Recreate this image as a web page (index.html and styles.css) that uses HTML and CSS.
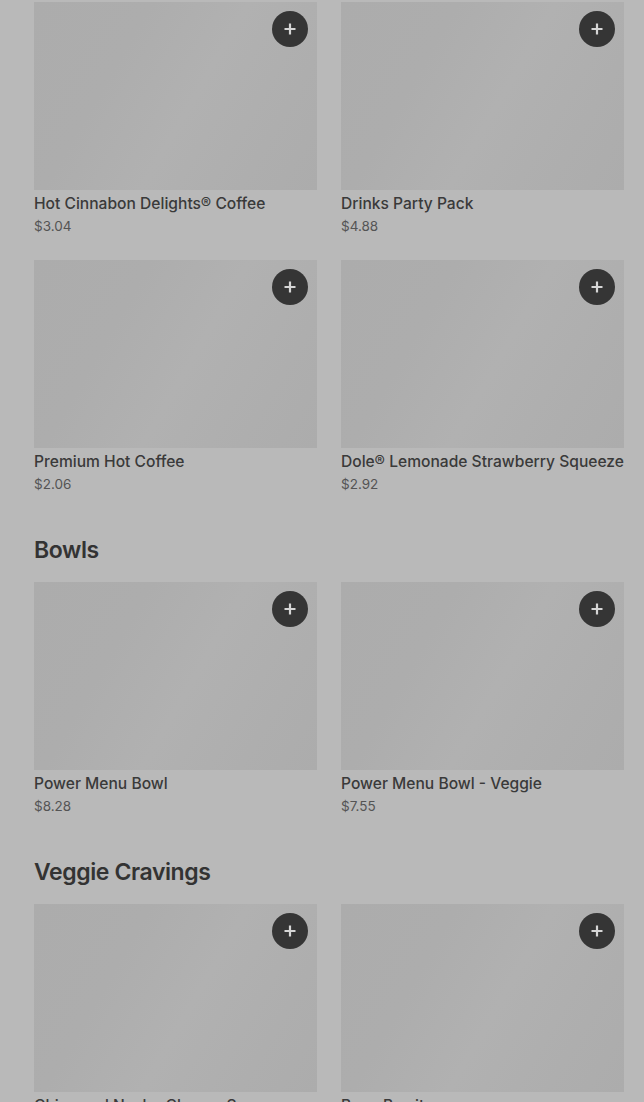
FILE: index.html
```html
<!DOCTYPE html>
<html lang="en">
<head>
<meta charset="utf-8">
<title>Menu</title>
<link rel="stylesheet" href="styles.css">
</head>
<body>
<main class="page">
  <section class="section first">
    <div class="grid">
      <div class="card">
        <div class="thumb"><button class="add" aria-label="Add"><svg viewBox="0 0 16 16" width="16" height="16"><path d="M8 2.5v11M2.5 8h11" stroke="currentColor" stroke-width="2.2" fill="none"/></svg></button></div>
        <div class="name">Hot Cinnabon Delights® Coffee</div>
        <div class="price">$3.04</div>
      </div>
      <div class="card">
        <div class="thumb"><button class="add" aria-label="Add"><svg viewBox="0 0 16 16" width="16" height="16"><path d="M8 2.5v11M2.5 8h11" stroke="currentColor" stroke-width="2.2" fill="none"/></svg></button></div>
        <div class="name">Drinks Party Pack</div>
        <div class="price">$4.88</div>
      </div>
      <div class="card">
        <div class="thumb"><button class="add" aria-label="Add"><svg viewBox="0 0 16 16" width="16" height="16"><path d="M8 2.5v11M2.5 8h11" stroke="currentColor" stroke-width="2.2" fill="none"/></svg></button></div>
        <div class="name">Premium Hot Coffee</div>
        <div class="price">$2.06</div>
      </div>
      <div class="card">
        <div class="thumb"><button class="add" aria-label="Add"><svg viewBox="0 0 16 16" width="16" height="16"><path d="M8 2.5v11M2.5 8h11" stroke="currentColor" stroke-width="2.2" fill="none"/></svg></button></div>
        <div class="name">Dole® Lemonade Strawberry Squeeze</div>
        <div class="price">$2.92</div>
      </div>
    </div>
  </section>
  <section class="section">
    <h2 class="heading">Bowls</h2>
    <div class="grid">
      <div class="card">
        <div class="thumb"><button class="add" aria-label="Add"><svg viewBox="0 0 16 16" width="16" height="16"><path d="M8 2.5v11M2.5 8h11" stroke="currentColor" stroke-width="2.2" fill="none"/></svg></button></div>
        <div class="name">Power Menu Bowl</div>
        <div class="price">$8.28</div>
      </div>
      <div class="card">
        <div class="thumb"><button class="add" aria-label="Add"><svg viewBox="0 0 16 16" width="16" height="16"><path d="M8 2.5v11M2.5 8h11" stroke="currentColor" stroke-width="2.2" fill="none"/></svg></button></div>
        <div class="name">Power Menu Bowl - Veggie</div>
        <div class="price">$7.55</div>
      </div>
    </div>
  </section>
  <section class="section">
    <h2 class="heading">Veggie Cravings</h2>
    <div class="grid">
      <div class="card">
        <div class="thumb"><button class="add" aria-label="Add"><svg viewBox="0 0 16 16" width="16" height="16"><path d="M8 2.5v11M2.5 8h11" stroke="currentColor" stroke-width="2.2" fill="none"/></svg></button></div>
        <div class="name">Chips and Nacho Cheese Sauce</div>
        <div class="price">$2.19</div>
      </div>
      <div class="card">
        <div class="thumb"><button class="add" aria-label="Add"><svg viewBox="0 0 16 16" width="16" height="16"><path d="M8 2.5v11M2.5 8h11" stroke="currentColor" stroke-width="2.2" fill="none"/></svg></button></div>
        <div class="name">Bean Burrito</div>
        <div class="price">$2.07</div>
      </div>
    </div>
  </section>
</main>
</body>
</html>
```
FILE: styles.css
```css
html, body {
  margin: 0;
  padding: 0;
  background: #b9b9b9;
}
body {
  font-family: Inter, "Noto Sans", "Liberation Sans", sans-serif;
  color: #363636;
  overflow: hidden;
}
.page {
  padding: 2px 20px 0 34px;
}
.section + .section {
  margin-top: 40px;
}
.heading {
  margin: 0 0 16px;
  font-size: 23px;
  line-height: 32px;
  font-weight: 600;
  letter-spacing: -0.4px;
  color: #333333;
}
.grid {
  display: grid;
  grid-template-columns: 283px 283px;
  column-gap: 24px;
  row-gap: 24px;
}
.card {
  display: flex;
  flex-direction: column;
}
.thumb {
  position: relative;
  height: 188px;
  background: linear-gradient(120deg, #acacac 0%, #adadad 30%, #b1b1b1 55%, #aeaeae 80%, #acacac 100%);
}
.add {
  position: absolute;
  top: 9px;
  right: 9px;
  width: 36px;
  height: 36px;
  border: 0;
  border-radius: 50%;
  background: #353535;
  color: #d6d6d6;
  display: flex;
  align-items: center;
  justify-content: center;
  padding: 0;
}
.name {
  margin-top: 3px;
  font-size: 15.6px;
  line-height: 22px;
  font-weight: 500;
  color: #3a3a3a;
  white-space: nowrap;
}
.price {
  margin-top: 1px;
  font-size: 13.5px;
  line-height: 20px;
  font-weight: 400;
  color: #545454;
}
```
